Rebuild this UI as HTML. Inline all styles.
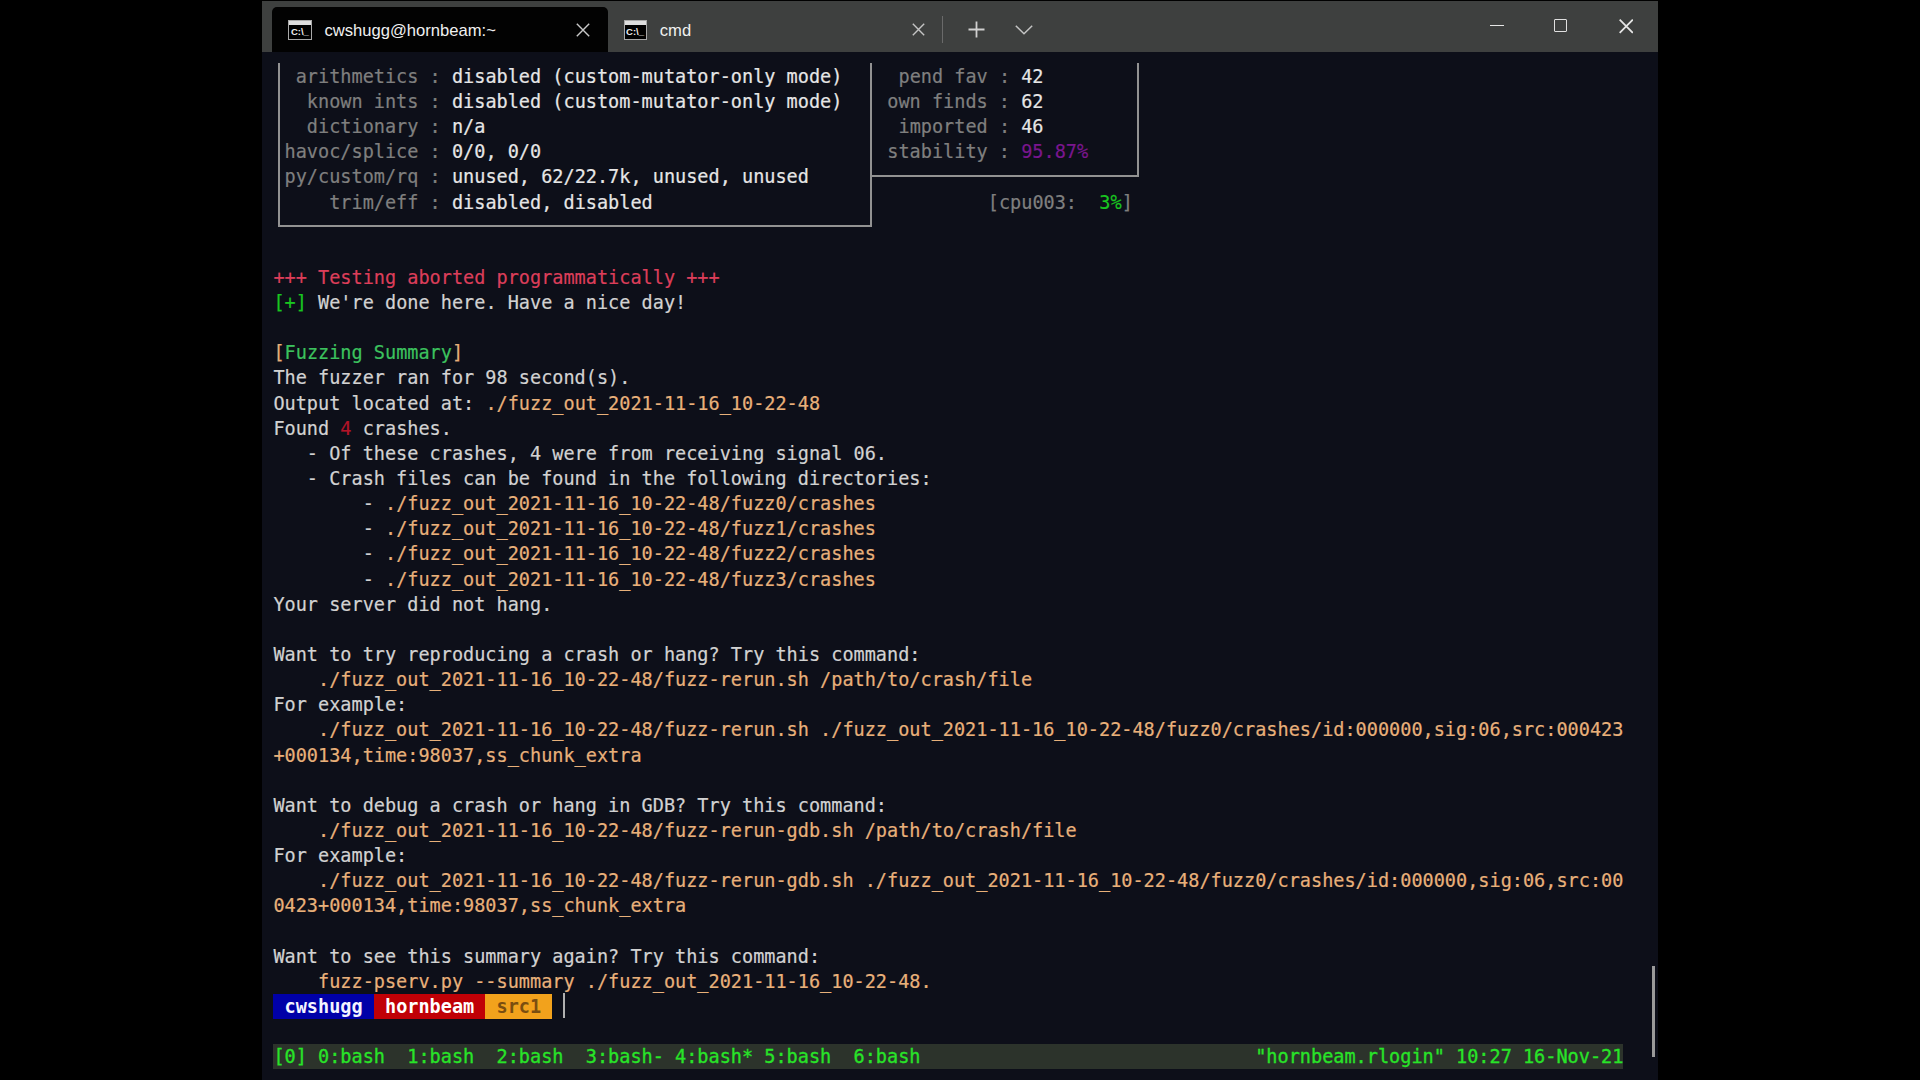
<!DOCTYPE html>
<html lang="en">
<head>
<meta charset="utf-8">
<title>cwshugg@hornbeam:~</title>
<style>
html,body{margin:0;padding:0;background:#000;}
body{width:1920px;height:1080px;overflow:hidden;position:relative;}
.win{position:absolute;left:262px;top:1px;width:1396px;height:1079px;background:#0d0f19;overflow:hidden;}
.tb{position:absolute;left:0;top:0;width:1396px;height:50.5px;background:#3e403f;}
.tab{position:absolute;left:10px;top:6px;width:336px;height:44.5px;background:#020202;border-radius:5px 5px 0 0;}
.tt{position:absolute;font-family:"Liberation Sans",sans-serif;font-size:16.6px;color:#f0f0f0;white-space:pre;line-height:20px;}
.ico{position:absolute;}
.cico{position:absolute;width:21.3px;height:17.2px;border:1.5px solid #a8a8a8;background:#000;overflow:hidden;}
.cico i{position:absolute;left:0;top:0;width:22px;height:3.8px;background:#dedede;}
.cico b{position:absolute;left:1.5px;top:5.9px;font-family:"Liberation Sans",sans-serif;font-size:9.5px;line-height:10px;font-weight:bold;color:#eee;letter-spacing:0px;white-space:pre;}
.term{position:absolute;left:0;top:0;width:1396px;height:1079px;}
.r{position:absolute;left:11.40px;height:25.14px;line-height:25.14px;font-family:"DejaVu Sans Mono","Liberation Mono",monospace;font-size:18.540px;color:#d2d2d2;white-space:pre;letter-spacing:0;-webkit-text-stroke:0.2px currentColor;}
.ln{position:absolute;}
.d{color:#7f7f7f}
.w{color:#e6e6e6}
.m{color:#7a168e}
.g{color:#19c620}
.g2{color:#3cc25e}
.red{color:#dc3e5a}
.dr{color:#b21428}
.o{color:#e8b07a}
.pb,.pr,.py,.st{display:inline-block;height:25.14px;vertical-align:top}
.pb,.pr,.py{-webkit-text-stroke:0}
.pb{background:#0000a8;color:#f4f4ff;font-weight:bold}
.pr{background:#c00006;color:#fff;font-weight:bold}
.py{background:#f2a21c;color:#7a4e10;font-weight:bold}
.st{background:#2c332b;color:#28e428;-webkit-text-stroke:0.3px #28e428;}
</style>
</head>
<body>
<div class="win">
<div class="tb"></div>
<div class="tab"></div>
<!-- tab 1 -->
<div class="cico" style="left:26.4px;top:19.4px"><i></i><b>C:\_</b></div>
<div class="tt" id="t1" style="left:62.5px;top:19.7px">cwshugg@hornbeam:~</div>
<svg class="ico" style="left:314px;top:21.5px" width="14" height="14" viewBox="0 0 14 14"><path d="M0.8 0.8 L13.2 13.2 M13.2 0.8 L0.8 13.2" stroke="#c8c8c8" stroke-width="1.4" fill="none"/></svg>
<!-- tab 2 -->
<div class="cico" style="left:361.6px;top:19.4px"><i></i><b>C:\_</b></div>
<div class="tt" id="t2" style="left:397.8px;top:19.7px">cmd</div>
<svg class="ico" style="left:649.5px;top:22px" width="13" height="13" viewBox="0 0 13 13"><path d="M0.8 0.8 L12.2 12.2 M12.2 0.8 L0.8 12.2" stroke="#c4c4c4" stroke-width="1.4" fill="none"/></svg>
<div class="ln" style="left:680px;top:15px;width:1px;height:27px;background:#6a6a6a"></div>
<svg class="ico" style="left:705.9px;top:19.8px" width="17" height="17" viewBox="0 0 17 17"><path d="M8.5 0.5 V16.5 M0.5 8.5 H16.5" stroke="#d0d0d0" stroke-width="1.8" fill="none"/></svg>
<svg class="ico" style="left:753px;top:23.5px" width="18" height="10" viewBox="0 0 18 10"><path d="M0.8 0.8 L9 8.8 L17.2 0.8" stroke="#c4c4c4" stroke-width="1.5" fill="none"/></svg>
<!-- window controls -->
<div class="ln" style="left:1228px;top:23.6px;width:14px;height:1.9px;background:#e6e6e6"></div>
<div class="ln" style="left:1292px;top:18.1px;width:11.4px;height:11.4px;border:1.8px solid #e0e0e0;border-radius:1px"></div>
<svg class="ico" style="left:1356.5px;top:18px" width="14.5" height="14.5" viewBox="0 0 15 15"><path d="M0.7 0.7 L14.3 14.3 M14.3 0.7 L0.7 14.3" stroke="#e6e6e6" stroke-width="1.8" fill="none"/></svg>
<div class="term">
<div class="ln" style="left:15.98px;top:61.50px;width:2.00px;height:164.61px;background:#929292"></div>
<div class="ln" style="left:607.57px;top:61.50px;width:2.00px;height:164.61px;background:#929292"></div>
<div class="ln" style="left:875.45px;top:61.50px;width:2.00px;height:114.33px;background:#929292"></div>
<div class="ln" style="left:15.98px;top:224.11px;width:593.59px;height:2.00px;background:#929292"></div>
<div class="ln" style="left:607.57px;top:173.83px;width:269.89px;height:2.00px;background:#929292"></div>
<div class="r" style="top:62.80px"><span class="d">  arithmetics : </span><span class="w">disabled (custom-mutator-only mode)</span></div>
<div class="r" style="top:87.94px"><span class="d">   known ints : </span><span class="w">disabled (custom-mutator-only mode)</span></div>
<div class="r" style="top:113.08px"><span class="d">   dictionary : </span><span class="w">n/a</span></div>
<div class="r" style="top:138.22px"><span class="d"> havoc/splice : </span><span class="w">0/0, 0/0</span></div>
<div class="r" style="top:163.36px"><span class="d"> py/custom/rq : </span><span class="w">unused, 62/22.7k, unused, unused</span></div>
<div class="r" style="top:188.50px"><span class="d">     trim/eff : </span><span class="w">disabled, disabled</span></div>
<div class="r" style="top:62.80px;left:636.47px"><span class="d">pend fav : </span><span class="w">42</span></div>
<div class="r" style="top:87.94px;left:625.31px"><span class="d">own finds : </span><span class="w">62</span></div>
<div class="r" style="top:113.08px;left:636.47px"><span class="d">imported : </span><span class="w">46</span></div>
<div class="r" style="top:138.22px;left:625.31px"><span class="d">stability : </span><span class="m">95.87%</span></div>
<div class="r" style="top:188.50px;left:725.77px"><span class="d">[cpu003:  </span><span class="g">3%</span><span class="d">]</span></div>
<div class="r" style="top:263.92px"><span class="red">+++ Testing aborted programmatically +++</span></div>
<div class="r" style="top:289.06px"><span class="g">[+]</span> We're done here. Have a nice day!</div>
<div class="r" style="top:339.34px"><span class="o">[</span><span class="g2">Fuzzing Summary</span><span class="o">]</span></div>
<div class="r" style="top:364.48px">The fuzzer ran for 98 second(s).</div>
<div class="r" style="top:389.62px">Output located at: <span class="o">./fuzz_out_2021-11-16_10-22-48</span></div>
<div class="r" style="top:414.76px">Found <span class="dr">4</span> crashes.</div>
<div class="r" style="top:439.90px">   - Of these crashes, 4 were from receiving signal 06.</div>
<div class="r" style="top:465.04px">   - Crash files can be found in the following directories:</div>
<div class="r" style="top:490.18px">        - <span class="o">./fuzz_out_2021-11-16_10-22-48/fuzz0/crashes</span></div>
<div class="r" style="top:515.32px">        - <span class="o">./fuzz_out_2021-11-16_10-22-48/fuzz1/crashes</span></div>
<div class="r" style="top:540.46px">        - <span class="o">./fuzz_out_2021-11-16_10-22-48/fuzz2/crashes</span></div>
<div class="r" style="top:565.60px">        - <span class="o">./fuzz_out_2021-11-16_10-22-48/fuzz3/crashes</span></div>
<div class="r" style="top:590.74px">Your server did not hang.</div>
<div class="r" style="top:641.02px">Want to try reproducing a crash or hang? Try this command:</div>
<div class="r" style="top:666.16px"><span class="o">    ./fuzz_out_2021-11-16_10-22-48/fuzz-rerun.sh /path/to/crash/file</span></div>
<div class="r" style="top:691.30px">For example:</div>
<div class="r" style="top:716.44px"><span class="o">    ./fuzz_out_2021-11-16_10-22-48/fuzz-rerun.sh ./fuzz_out_2021-11-16_10-22-48/fuzz0/crashes/id:000000,sig:06,src:000423</span></div>
<div class="r" style="top:741.58px"><span class="o">+000134,time:98037,ss_chunk_extra</span></div>
<div class="r" style="top:791.86px">Want to debug a crash or hang in GDB? Try this command:</div>
<div class="r" style="top:817.00px"><span class="o">    ./fuzz_out_2021-11-16_10-22-48/fuzz-rerun-gdb.sh /path/to/crash/file</span></div>
<div class="r" style="top:842.14px">For example:</div>
<div class="r" style="top:867.28px"><span class="o">    ./fuzz_out_2021-11-16_10-22-48/fuzz-rerun-gdb.sh ./fuzz_out_2021-11-16_10-22-48/fuzz0/crashes/id:000000,sig:06,src:00</span></div>
<div class="r" style="top:892.42px"><span class="o">0423+000134,time:98037,ss_chunk_extra</span></div>
<div class="r" style="top:942.70px">Want to see this summary again? Try this command:</div>
<div class="r" style="top:967.84px"><span class="o">    fuzz-pserv.py --summary ./fuzz_out_2021-11-16_10-22-48.</span></div>
<div class="r" style="top:992.98px"><span class="pb"> cwshugg </span><span class="pr"> hornbeam </span><span class="py"> src1 </span></div>
<div class="r" style="top:1043.26px"><span class="st">[0] 0:bash  1:bash  2:bash  3:bash- 4:bash* 5:bash  6:bash                              "hornbeam.rlogin" 10:27 16-Nov-21</span></div>
<div class="ln" style="left:301px;top:992px;width:2px;height:25px;background:#b0b0b0"></div>
<div class="ln" style="left:1390px;top:965px;width:3px;height:91px;background:#9a9a9a"></div>
</div>
</div>
</body>
</html>
